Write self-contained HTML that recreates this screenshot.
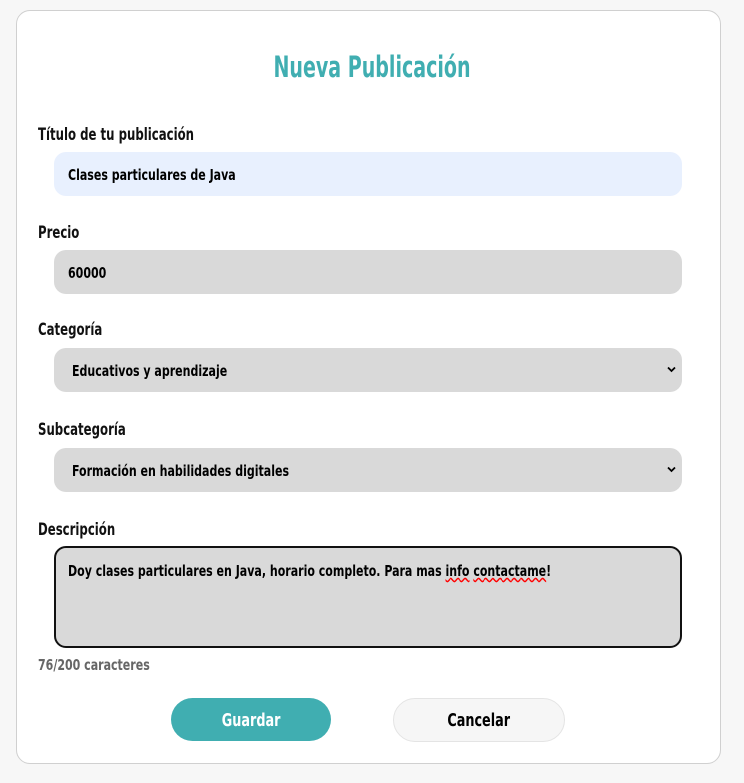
<!DOCTYPE html>
<html><head><meta charset="utf-8"><style>
body{margin:0;background:#f7f7f7;width:744px;height:783px;font-family:"DejaVu Sans Condensed","Liberation Sans",sans-serif;font-weight:bold;position:relative;overflow:hidden}
.card{position:absolute;left:16px;top:10px;width:703px;height:752px;background:#fff;border:1px solid #d0d0d0;border-radius:14px}
.a{position:absolute}
.s{display:inline-block;transform:scaleX(0.79);transform-origin:left center;white-space:nowrap}
.c{transform-origin:center center}
h1{position:absolute;left:0;width:744px;top:50px;margin:0;text-align:center;color:#40aeb1;font-size:29px}
.lbl{position:absolute;left:38px;font-size:16.5px;color:#111}
.f{position:absolute;left:54px;width:628px;height:44px;border-radius:12px;background:#d9d9d9;font-size:15.5px;color:#000;box-sizing:border-box;padding-left:14px;line-height:46px}
.sel{padding-left:18px}
.chev{position:absolute;right:6px;top:0;font-size:11px}
</style></head><body>
<div class="card"></div>
<h1><span class="s c" style="transform:scaleX(0.73)">Nueva Publicación</span></h1>
<div class="lbl" style="top:125px"><span class="s">Título de tu publicación</span></div>
<div class="f" style="top:152px;background:#e8f0fe"><span class="s">Clases particulares de Java</span></div>
<div class="lbl" style="top:223px"><span class="s">Precio</span></div>
<div class="f" style="top:250px"><span class="s">60000</span></div>
<div class="lbl" style="top:320px"><span class="s">Categoría</span></div>
<div class="f sel" style="top:348px"><span class="s">Educativos y aprendizaje</span><svg class="chev" style="top:18px" width="9" height="7" viewBox="0 0 9 7"><path d="M1 1.5L4.5 5L8 1.5" stroke="#000" stroke-width="1.8" fill="none"/></svg></div>
<div class="lbl" style="top:420px"><span class="s">Subcategoría</span></div>
<div class="f sel" style="top:448px"><span class="s">Formación en habilidades digitales</span><svg class="chev" style="top:18px" width="9" height="7" viewBox="0 0 9 7"><path d="M1 1.5L4.5 5L8 1.5" stroke="#000" stroke-width="1.8" fill="none"/></svg></div>
<div class="lbl" style="top:520px"><span class="s">Descripción</span></div>
<div class="f" style="top:546px;height:102px;border:2px solid #111;line-height:normal;padding-top:14px;padding-left:12px"><span class="s">Doy clases particulares en Java, horario completo. Para mas <span style="text-decoration:underline wavy red">info</span> <span style="text-decoration:underline wavy red">contactame</span>!</span></div>
<div class="a" style="left:38px;top:656px;font-size:15.5px;color:#666"><span class="s">76/200 caracteres</span></div>
<div class="a" style="left:171px;top:698px;width:160px;height:43px;border-radius:22px;background:#40aeb1;color:#fff;font-size:18px;text-align:center;line-height:45px"><span class="s c">Guardar</span></div>
<div class="a" style="left:393px;top:698px;width:170px;height:42px;border-radius:22px;background:#f6f6f6;border:1px solid #e4e4e4;color:#000;font-size:18px;text-align:center;line-height:44px"><span class="s c">Cancelar</span></div>
</body></html>
